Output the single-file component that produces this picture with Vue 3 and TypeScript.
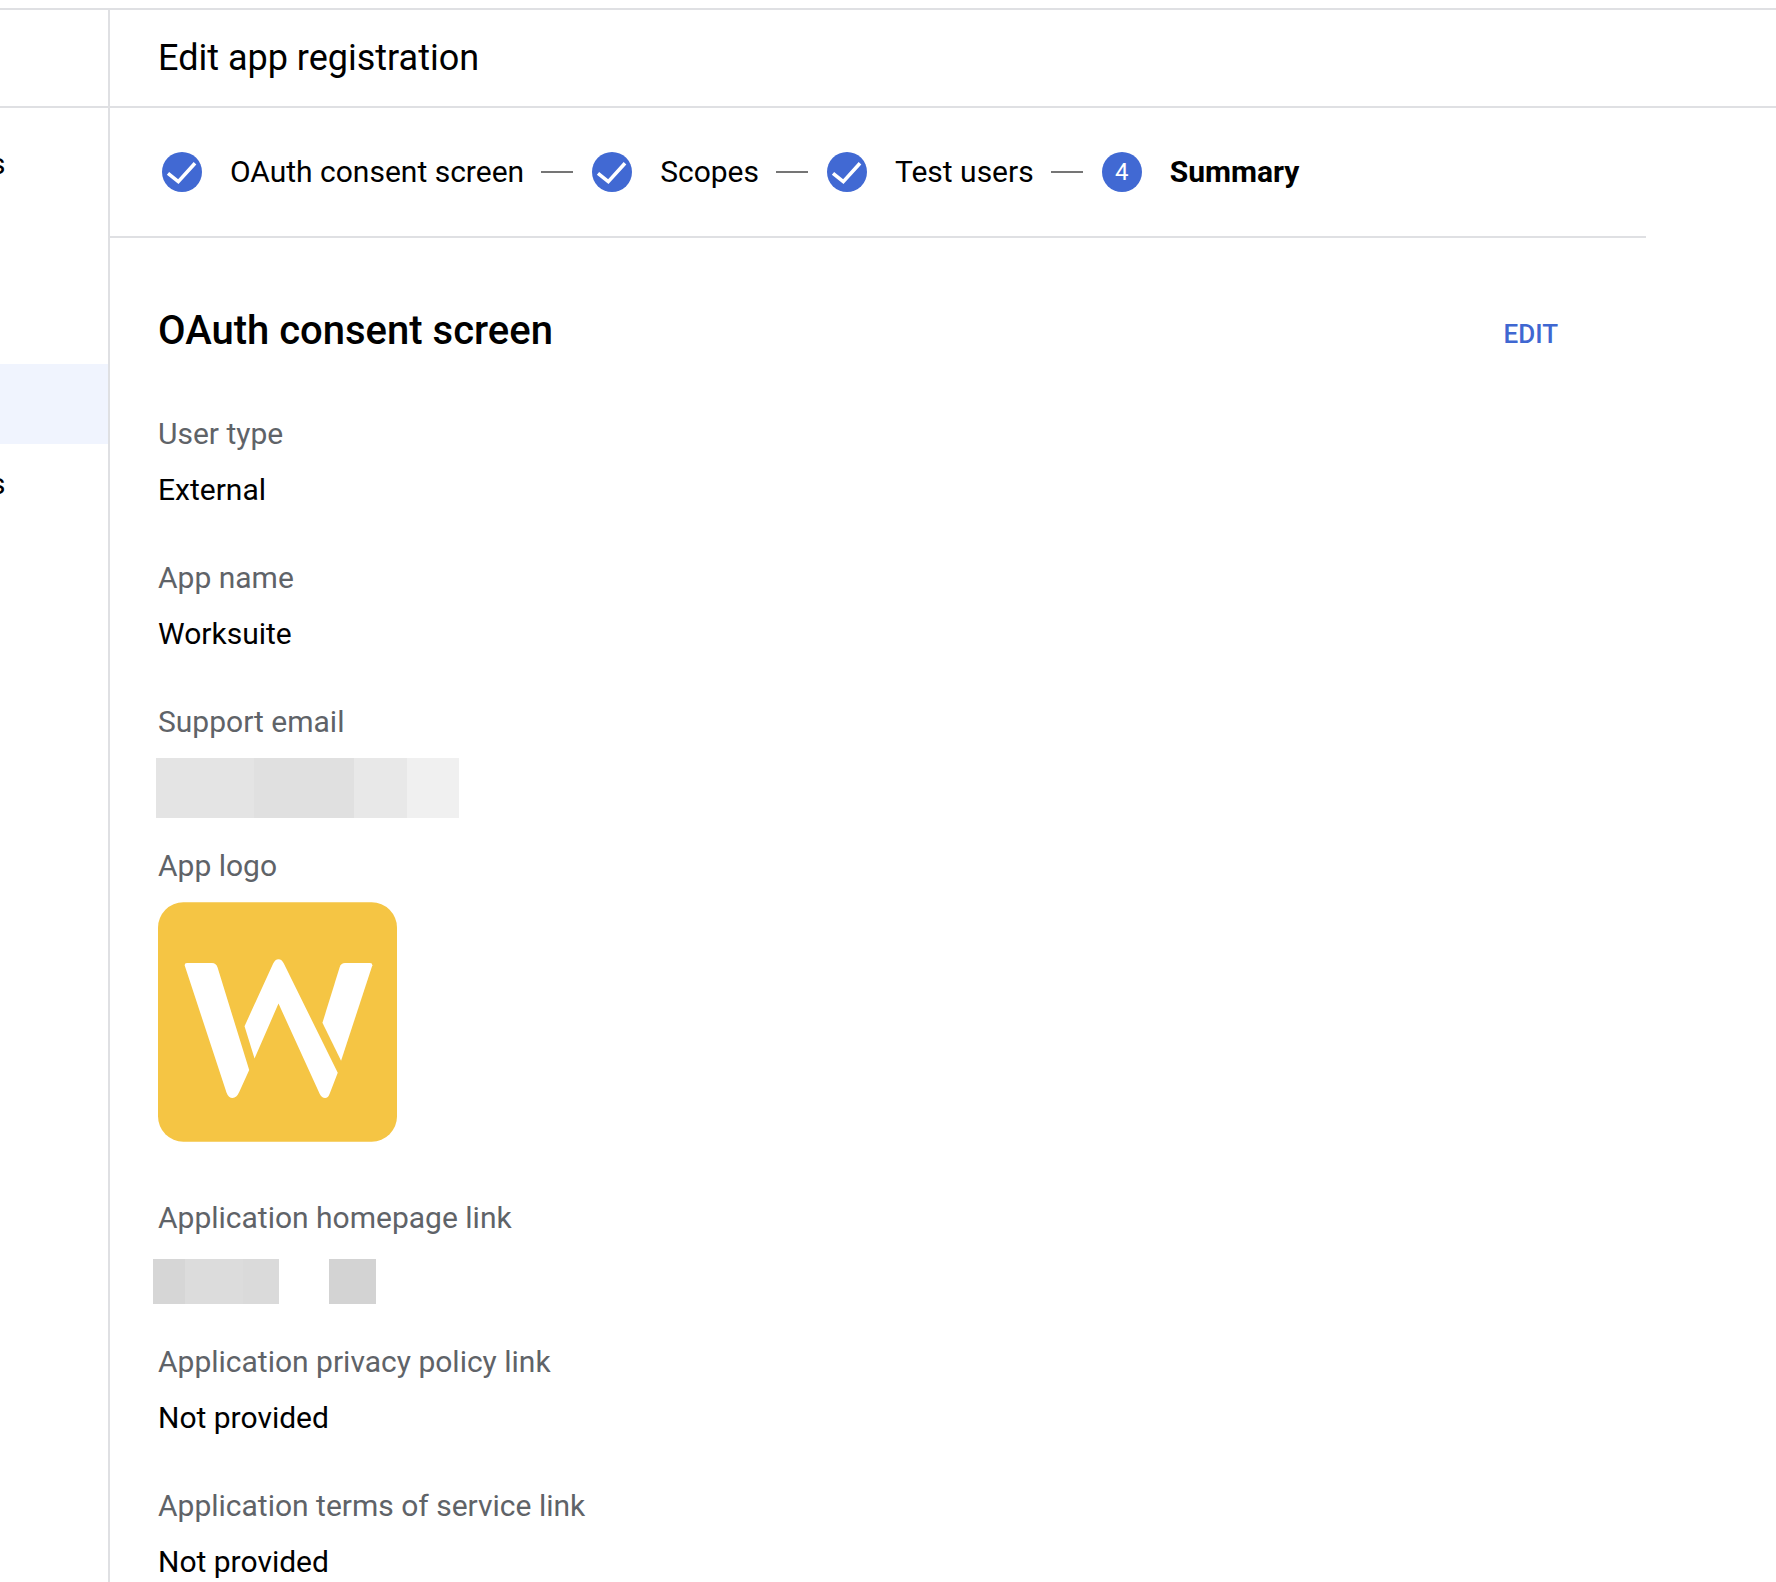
<template>
  <div class="page">
    <header class="topbar">
      <div class="topbar-side"></div>
      <h1 class="title">Edit app registration</h1>
    </header>

    <div class="body">
      <nav class="sidebar">
        <div v-for="(item, i) in navItems" :key="i" class="nav-item" :class="{ active: item.active }">
          <span class="nav-text">{{ item.text }}</span>
        </div>
      </nav>

      <main class="main">
        <div class="stepper">
          <template v-for="(step, i) in steps" :key="step.label">
            <span v-if="i > 0" class="step-line"></span>
            <div class="step" :class="{ current: !step.done }">
              <span class="step-circle">
                <svg v-if="step.done" width="40" height="40" viewBox="0 0 40 40" fill="none">
                  <path d="M6 21.3 L16.3 29.6 L33 11.3" stroke="#fff" stroke-width="3.6" />
                </svg>
                <template v-else>{{ i + 1 }}</template>
              </span>
              <span class="step-label">{{ step.label }}</span>
            </div>
          </template>
        </div>

        <section class="summary">
          <div class="section-head">
            <h2 class="section-title">OAuth consent screen</h2>
            <a class="edit">EDIT</a>
          </div>

          <div class="field">
            <div class="label">User type</div>
            <div class="value">External</div>
          </div>
          <div class="field">
            <div class="label">App name</div>
            <div class="value">Worksuite</div>
          </div>

          <div class="field field-blur">
            <div class="label">Support email</div>
            <div class="redact redact-email">
              <span v-for="(s, i) in emailBlur" :key="i" :style="{ width: s.w + 'px', background: s.c }"></span>
            </div>
          </div>

          <div class="field field-logo">
            <div class="label">App logo</div>
            <svg class="logo" viewBox="54 486 718 719">
              <rect x="54" y="486" width="718" height="719" rx="76" fill="#f5c544" />
              <path fill="#fff" d="M134 675 q0-7 7-7 L216 668 q13 0 17 14 L328 990 L298 1056 q-8 18 -20 18 q-12 0 -18 -16 Z" />
              <path fill="#fff" d="M314 858 L400 670 q6 -13 16 -13 q10 0 16 13 L594 998 L570 1060 q-5 14 -14 14 q-10 0 -16 -12 L416 790 L344 955 Z" />
              <path fill="#fff" d="M698 675 q0 -7 -7 -7 L616 668 q-12 0 -16 12 L548 848 L604 962 Z" />
            </svg>
          </div>

          <div class="field field-link">
            <div class="label">Application homepage link</div>
            <div class="redact redact-link">
              <span v-for="(s, i) in linkBlur" :key="i" :style="{ width: s.w + 'px', background: s.c }"></span>
            </div>
          </div>

          <div class="field">
            <div class="label">Application privacy policy link</div>
            <div class="value">Not provided</div>
          </div>
          <div class="field">
            <div class="label">Application terms of service link</div>
            <div class="value">Not provided</div>
          </div>
        </section>
      </main>
    </div>
  </div>
</template>

<script setup lang="ts">
interface NavItem {
  text: string
  active?: boolean
}

interface Step {
  label: string
  done: boolean
}

interface Block {
  w: number
  c: string
}

const navItems: NavItem[] = [
  { text: 's' },
  { text: '' },
  { text: '' },
  { text: '', active: true },
  { text: 's' }
]

const steps: Step[] = [
  { label: 'OAuth consent screen', done: true },
  { label: 'Scopes', done: true },
  { label: 'Test users', done: true },
  { label: 'Summary', done: false }
]

const emailBlur: Block[] = [
  { w: 98, c: '#e4e4e4' },
  { w: 100, c: '#e0e0e0' },
  { w: 53, c: '#e8e8e8' },
  { w: 52, c: '#f0f0f0' }
]

const linkBlur: Block[] = [
  { w: 32, c: '#d6d6d6' },
  { w: 58, c: '#dcdcdc' },
  { w: 36, c: '#dadada' },
  { w: 50, c: 'transparent' },
  { w: 47, c: '#d3d3d3' }
]
</script>

<style>
html,
body {
  margin: 0;
  background: #fff;
  overflow: hidden;
}
</style>

<style scoped>
.page {
  height: 1582px;
  overflow: hidden;
  padding-top: 8px;
  box-sizing: border-box;
  font-family: Roboto, "Liberation Sans", sans-serif;
  color: #000;
  background: #fff;
}

.topbar {
  display: flex;
  height: 96px;
  border-top: 2px solid #dfe0e3;
  border-bottom: 2px solid #dfe0e3;
}

.topbar-side {
  width: 108px;
  border-right: 2px solid #dfe0e3;
}

.title {
  margin: 0 0 0 48px;
  font-size: 36px;
  font-weight: 400;
  line-height: 96px;
}

.body {
  display: flex;
}

.sidebar {
  width: 108px;
  height: 1458px;
  padding-top: 16px;
  border-right: 2px solid #dfe0e3;
  overflow: hidden;
  flex-shrink: 0;
}

.nav-item {
  height: 80px;
  display: flex;
  align-items: center;
  font-size: 30px;
  overflow: hidden;
}

.nav-item.active {
  background: #f0f4fe;
}

.nav-text {
  margin: -2px 0 0 -10px;
}

.main {
  width: 1536px;
}

.stepper {
  display: flex;
  align-items: center;
  height: 128px;
  padding-left: 52px;
  border-bottom: 2px solid #dfe0e3;
}

.step {
  display: flex;
  align-items: center;
  gap: 28px;
  font-size: 30px;
}

.step-label {
  margin-top: -2px;
}

.step.current .step-label {
  font-weight: 700;
}

.step-circle {
  width: 40px;
  height: 40px;
  border-radius: 50%;
  background: #4169d3;
  color: #fff;
  font-size: 24px;
  display: flex;
  align-items: center;
  justify-content: center;
  flex-shrink: 0;
}

.step-line {
  width: 32px;
  height: 2px;
  margin: 0 19px 0 17px;
  background: #757575;
}

.summary {
  padding: 0 88px 0 48px;
}

.section-head {
  display: flex;
  justify-content: space-between;
  align-items: center;
  height: 110px;
  margin-top: 37px;
  margin-bottom: 29px;
}

.section-title {
  margin: 0;
  font-size: 40px;
  font-weight: 500;
}

.edit {
  font-size: 26px;
  font-weight: 500;
  color: #3f67d1;
  margin-top: 8px;
}

.field {
  margin-bottom: 48px;
}

.label {
  font-size: 30px;
  line-height: 40px;
  color: #5f6368;
}

.value {
  font-size: 30px;
  line-height: 40px;
  margin-top: 16px;
}

.field-blur {
  margin-bottom: 28px;
}

.field-logo {
  margin-bottom: 56px;
}

.field-link {
  margin-bottom: 38px;
}

.redact {
  display: flex;
}

.redact-email {
  height: 60px;
  margin: 16px 0 0 -2px;
}

.redact-link {
  height: 45px;
  margin: 21px 0 0 -5px;
}

.logo {
  display: block;
  width: 239px;
  height: 240px;
  margin-top: 16px;
}
</style>
